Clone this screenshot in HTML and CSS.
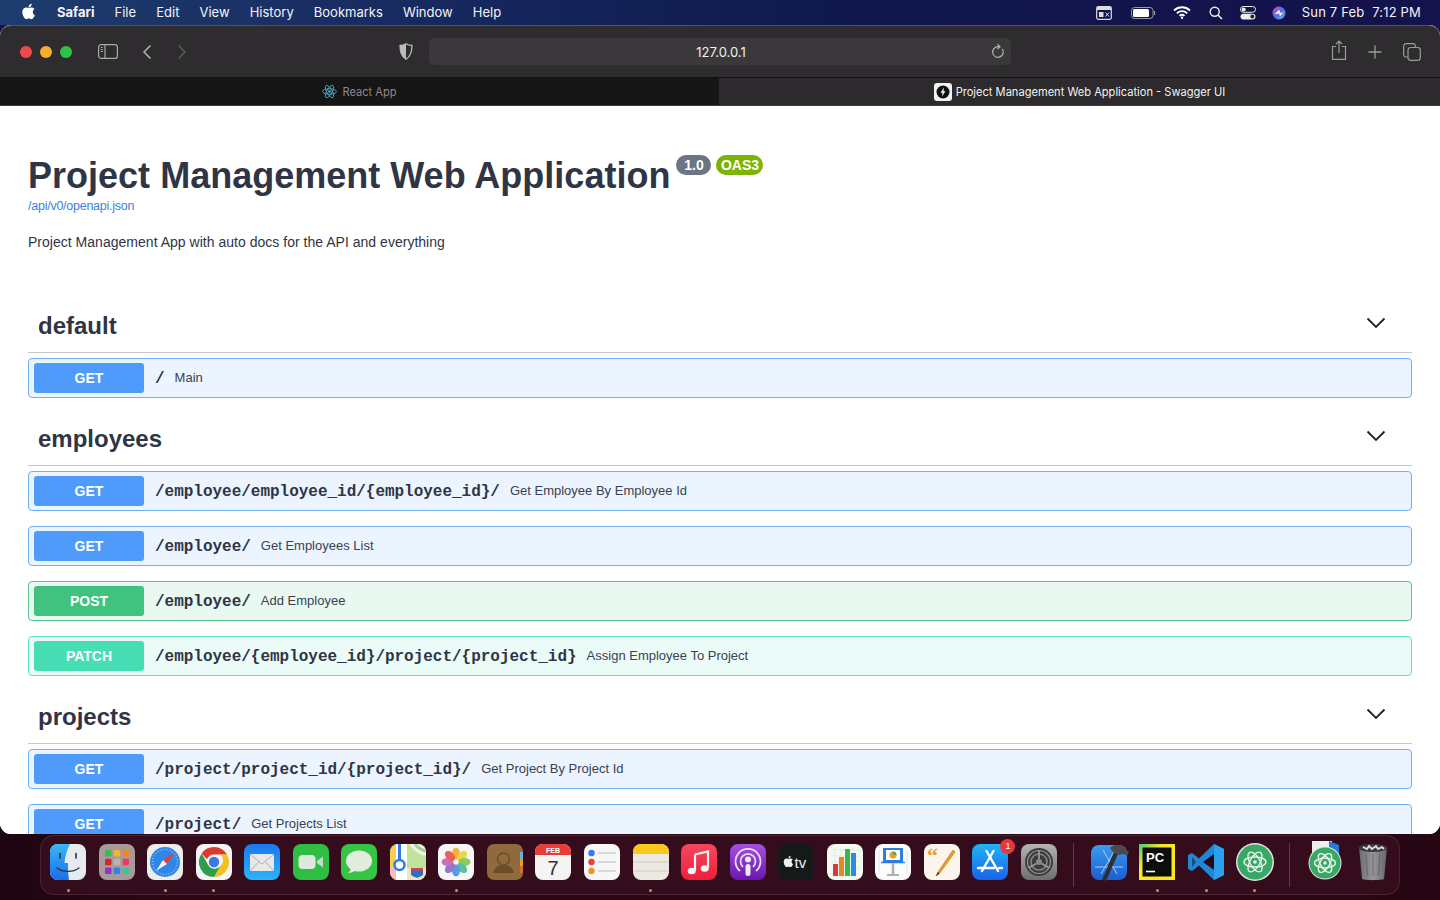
FILE: index.html
```html
<!DOCTYPE html>
<html lang="en">
<head>
<meta charset="utf-8">
<title>Project Management Web Application - Swagger UI</title>
<link rel="stylesheet" href="styles.css">
</head>
<body>
<div class="desktop">
  <header class="menubar">
    <svg class="apple" viewBox="0 0 24 24"><path fill="#fff" d="M17.05 12.04c-.03-2.6 2.12-3.85 2.22-3.91-1.21-1.77-3.09-2.01-3.76-2.04-1.6-.16-3.12.94-3.93.94-.81 0-2.06-.92-3.39-.89-1.74.03-3.35 1.01-4.25 2.57-1.81 3.14-.46 7.79 1.3 10.34.86 1.25 1.89 2.65 3.24 2.6 1.3-.05 1.79-.84 3.36-.84s2.01.84 3.39.82c1.4-.03 2.28-1.27 3.14-2.53.99-1.45 1.4-2.85 1.42-2.93-.03-.01-2.72-1.04-2.74-4.13zM14.47 4.4c.72-.87 1.2-2.08 1.07-3.28-1.03.04-2.28.69-3.02 1.55-.66.77-1.24 2-1.09 3.18 1.15.09 2.33-.59 3.04-1.45z"/></svg>
    <nav class="menus">
      <span class="menu-app">Safari</span><span>File</span><span>Edit</span><span>View</span><span>History</span><span>Bookmarks</span><span>Window</span><span>Help</span>
    </nav>
    <div class="status">
      <svg class="st st-cal" viewBox="0 0 16 14"><rect x=".7" y=".7" width="14.6" height="12.6" rx="1.5" fill="none" stroke="#ddd" stroke-width="1.2"/><rect x="1" y="1" width="14" height="3" fill="#ddd"/><rect x="3" y="6" width="4.500" height="5" fill="#ddd"/><path d="M9.500 6.500l3.500 4M13 6.500l-3.500 4" stroke="#ddd"/></svg>
      <svg class="st st-bat" viewBox="0 0 25 12"><rect x=".5" y=".5" width="21.500" height="11" rx="3" fill="none" stroke="#999"/><rect x="2" y="2" width="16" height="8" rx="1.500" fill="#fff"/><path d="M23.500 4v4" stroke="#999" stroke-width="1.200"/></svg>
      <svg class="st st-wifi" viewBox="0 0 18 13"><path d="M1 4.500a11.500 11.500 0 0 1 16 0M3.800 7.300a7.500 7.500 0 0 1 10.400 0M6.500 9.900a3.700 3.700 0 0 1 5 0" fill="none" stroke="#fff" stroke-width="1.800"/><circle cx="9" cy="11.800" r="1.200" fill="#fff"/></svg>
      <svg class="st st-search" viewBox="0 0 14 14"><circle cx="5.700" cy="5.700" r="4.500" fill="none" stroke="#eee" stroke-width="1.400"/><path d="M9 9l4 4" stroke="#eee" stroke-width="1.600"/></svg>
      <svg class="st st-ctrl" viewBox="0 0 16 14"><rect x=".5" y=".5" width="15" height="5.800" rx="2.900" fill="none" stroke="#eee"/><circle cx="3.700" cy="3.400" r="2" fill="#eee"/><rect x=".5" y="7.700" width="15" height="5.800" rx="2.900" fill="#eee"/><circle cx="12.300" cy="10.600" r="2" fill="#223"/></svg>
      <svg class="st st-siri" viewBox="0 0 14 14"><defs><linearGradient id="siri" x1="0" y1="0" x2="1" y2="1"><stop offset="0" stop-color="#d04fc0"/><stop offset=".5" stop-color="#5a68e8"/><stop offset="1" stop-color="#4cc4d8"/></linearGradient></defs><circle cx="7" cy="7" r="6.500" fill="url(#siri)"/><path d="M2.500 8.500L7 3.500l1.500 3.500 3-1-3.500 4.500L7 7.500z" fill="#fff" opacity=".9"/></svg>
      <span class="clock">Sun 7 Feb&nbsp; 7:12 PM</span>
    </div>
  </header>

  <main class="window">
    <div class="toolbar">
      <div class="lights"><i class="light red"></i><i class="light amber"></i><i class="light green"></i></div>
      <svg class="tb tb-side" viewBox="0 0 20 15"><rect x=".6" y=".6" width="18.800" height="13.800" rx="2.500" fill="none" stroke="#a9a9a9" stroke-width="1.200"/><path d="M7 1v13" stroke="#a9a9a9" stroke-width="1.200"/><path d="M2.800 3.500h2M2.800 5.500h2M2.800 7.500h2" stroke="#a9a9a9"/></svg>
      <svg class="tb tb-back" viewBox="0 0 10 16"><path d="M8.500 1.500L2 8l6.500 6.500" fill="none" stroke="#b5b5b5" stroke-width="1.500"/></svg>
      <svg class="tb tb-fwd" viewBox="0 0 10 16"><path d="M1.500 1.500L8 8l-6.500 6.500" fill="none" stroke="#5a5a5a" stroke-width="1.500"/></svg>
      <svg class="tb tb-shield" viewBox="0 0 14 17"><path d="M7 .8c2 1.200 3.800 1.600 6 1.700 0 6-.8 10.500-6 13.700C1.800 13 1 8.500 1 2.500c2.200-.1 4-.5 6-1.700z" fill="none" stroke="#bbb" stroke-width="1.300"/><path d="M7 .8c-2 1.200-3.800 1.600-6 1.700 0 6 .8 10.500 6 13.700z" fill="#bbb"/></svg>
      <div class="urlbar">
        <span class="url">127.0.0.1</span>
        <svg class="reload" viewBox="0 0 14 16"><path d="M11.300 6a5.300 5.300 0 1 1-4.300-2.300h1.500" fill="none" stroke="#b5b5b5" stroke-width="1.200"/><path d="M6.500 1.200L9 3.700 6.500 6" fill="none" stroke="#b5b5b5" stroke-width="1.200"/></svg>
      </div>
      <div class="tb-right">
        <svg class="tb tb-share" viewBox="0 0 16 20"><path d="M5 6.500H1.500v12.800h13V6.500H11" fill="none" stroke="#9c9c9c" stroke-width="1.200"/><path d="M8 13V1.200M5 4l3-3 3 3" fill="none" stroke="#9c9c9c" stroke-width="1.200"/></svg>
        <svg class="tb tb-plus" viewBox="0 0 14 14"><path d="M7 .5v13M.5 7h13" stroke="#9c9c9c" stroke-width="1.300"/></svg>
        <svg class="tb tb-tabs" viewBox="0 0 18 18"><rect x="5" y="4.500" width="12.300" height="12.800" rx="2.500" fill="none" stroke="#9c9c9c" stroke-width="1.200"/><path d="M5 14H3a2.300 2.300 0 0 1-2.300-2.300V3A2.300 2.300 0 0 1 3 .7h7A2.300 2.300 0 0 1 12.300 3v1.500" fill="none" stroke="#9c9c9c" stroke-width="1.200"/></svg>
      </div>
    </div>

    <div class="tabs">
      <div class="tab tab-off">
        <svg class="favicon-react" viewBox="0 0 24 24"><g fill="none" stroke="#4fb8d8" stroke-width="1.300"><ellipse cx="12" cy="12" rx="11" ry="4.300"/><ellipse cx="12" cy="12" rx="11" ry="4.300" transform="rotate(60 12 12)"/><ellipse cx="12" cy="12" rx="11" ry="4.300" transform="rotate(120 12 12)"/></g><circle cx="12" cy="12" r="2.100" fill="#4fb8d8"/></svg>
        <span>React App</span>
      </div>
      <div class="tab tab-on">
        <svg class="favicon-swagger" viewBox="0 0 18 18"><rect width="18" height="18" rx="3" fill="#f2f2f2"/><circle cx="9" cy="9" r="6.500" fill="#111"/><path d="M10 4.500L6.500 9.800h2L8 13.500l3.500-5.300h-2z" fill="#f2f2f2"/></svg>
        <span>Project Management Web Application - Swagger UI</span>
      </div>
    </div>

    <div class="page">
      <section class="info">
        <div class="title-row">
          <h1 class="title">Project Management Web Application</h1>
          <span class="badge badge-ver">1.0</span>
          <span class="badge badge-oas">OAS3</span>
        </div>
        <a class="spec-link" href="#">/api/v0/openapi.json</a>
        <p class="desc">Project Management App with auto docs for the API and everything</p>
      </section>

      <section class="tag">
        <div class="tag-head"><h2>default</h2><svg class="chev" viewBox="0 0 20 12"><path d="M1.500 1.500L10 10l8.500-8.500" fill="none" stroke="#222" stroke-width="1.800"/></svg></div>
        <div class="op op-get"><span class="method">GET</span><span class="path">/</span><span class="summary">Main</span></div>
      </section>

      <section class="tag">
        <div class="tag-head"><h2>employees</h2><svg class="chev" viewBox="0 0 20 12"><path d="M1.500 1.500L10 10l8.500-8.500" fill="none" stroke="#222" stroke-width="1.800"/></svg></div>
        <div class="op op-get"><span class="method">GET</span><span class="path">/employee/employee_id/{employee_id}/</span><span class="summary">Get Employee By Employee Id</span></div>
        <div class="op op-get"><span class="method">GET</span><span class="path">/employee/</span><span class="summary">Get Employees List</span></div>
        <div class="op op-post"><span class="method">POST</span><span class="path">/employee/</span><span class="summary">Add Employee</span></div>
        <div class="op op-patch"><span class="method">PATCH</span><span class="path">/employee/{employee_id}/project/{project_id}</span><span class="summary">Assign Employee To Project</span></div>
      </section>

      <section class="tag">
        <div class="tag-head"><h2>projects</h2><svg class="chev" viewBox="0 0 20 12"><path d="M1.500 1.500L10 10l8.500-8.500" fill="none" stroke="#222" stroke-width="1.800"/></svg></div>
        <div class="op op-get"><span class="method">GET</span><span class="path">/project/project_id/{project_id}/</span><span class="summary">Get Project By Project Id</span></div>
        <div class="op op-get"><span class="method">GET</span><span class="path">/project/</span><span class="summary">Get Projects List</span></div>
      </section>
    </div>
  </main>

  <footer class="dock-area">
    <div class="dock">
      <div class="app"><svg viewBox="0 0 36 36"><defs><clipPath id="r"><rect width="36" height="36" rx="8"/></clipPath><linearGradient id="fb" x1="0" y1="0" x2="0" y2="1"><stop offset="0" stop-color="#38b6f8"/><stop offset="1" stop-color="#1a6fe8"/></linearGradient></defs><g clip-path="url(#r)"><rect width="36" height="36" fill="#e6ebf0"/><path d="M0 0h20c-3 6-5 12-5.500 19H18c0 6 0 11 1 17H0z" fill="url(#fb)"/></g><path d="M10 9.500v4.500M26 9.500v4.500" stroke="#234" stroke-width="1.600" stroke-linecap="round"/><path d="M7 24c6 4.500 16 4.500 22 0" fill="none" stroke="#234" stroke-width="1.300" stroke-linecap="round"/></svg><i class="dot"></i></div>
      <div class="app"><svg viewBox="0 0 36 36"><rect width="36" height="36" rx="8" fill="#a89a9a"/><g><rect x="6" y="6" width="6.500" height="6.500" rx="1.200" fill="#3dbb4c"/><rect x="14.700" y="6" width="6.500" height="6.500" rx="1.200" fill="#f5b32c"/><rect x="23.500" y="6" width="6.500" height="6.500" rx="1.200" fill="#f0852b"/><rect x="6" y="14.700" width="6.500" height="6.500" rx="1.200" fill="#d8232f"/><rect x="14.700" y="14.700" width="6.500" height="6.500" rx="1.200" fill="#b5b5b5"/><rect x="23.500" y="14.700" width="6.500" height="6.500" rx="1.200" fill="#ee3a63"/><rect x="6" y="23.500" width="6.500" height="6.500" rx="1.200" fill="#9530c8"/><rect x="14.700" y="23.500" width="6.500" height="6.500" rx="1.200" fill="#2c86ea"/><rect x="23.500" y="23.500" width="6.500" height="6.500" rx="1.200" fill="#32c79c"/></g></svg></div>
      <div class="app"><svg viewBox="0 0 36 36"><rect width="36" height="36" rx="8" fill="#ececec"/><circle cx="18" cy="18" r="15" fill="#2f86e6"/><circle cx="18" cy="18" r="12.500" fill="none" stroke="#8fc0f0" stroke-width="1.500" stroke-dasharray="1 2"/><path d="M27 9L16 16l4 4z" fill="#ee3b30"/><path d="M9 27l7-11 4 4z" fill="#f5f5f5"/></svg><i class="dot"></i></div>
      <div class="app"><svg viewBox="0 0 36 36"><rect width="36" height="36" rx="8" fill="#f4f4f4"/><path d="M18 3a15 15 0 0 1 13 7.500H18a7.500 7.500 0 0 0-7 4.800L5.700 9.400A15 15 0 0 1 18 3z" fill="#d93b2f"/><path d="M31 10.500A15 15 0 0 1 18 33l6.400-11A7.500 7.500 0 0 0 24.500 10.500z" fill="#f4c020"/><path d="M5.700 9.400L12 20.500A7.500 7.500 0 0 0 24.400 22L18 33A15 15 0 0 1 5.700 9.400z" fill="#2f9e48"/><circle cx="18" cy="18" r="6.500" fill="#f4f4f4"/><circle cx="18" cy="18" r="5.200" fill="#3b78e0"/></svg><i class="dot"></i></div>
      <div class="app"><svg viewBox="0 0 36 36"><defs><linearGradient id="mail" x1="0" y1="0" x2="0" y2="1"><stop offset="0" stop-color="#1a78f0"/><stop offset="1" stop-color="#2bb4f8"/></linearGradient></defs><rect width="36" height="36" rx="8" fill="url(#mail)"/><rect x="6" y="10" width="24" height="17" rx="1.500" fill="#e8e8e8"/><path d="M6.500 10.500L18 20l11.500-9.500M6.500 26.500l8.500-9M29.500 26.500l-8.500-9" fill="none" stroke="#a8a8a8" stroke-width=".9"/></svg></div>
      <div class="app"><svg viewBox="0 0 36 36"><rect width="36" height="36" rx="8" fill="#2fbe45"/><rect x="5.500" y="11" width="17" height="14" rx="4" fill="#dfe8dd"/><path d="M24 17l6-4.500v11L24 19z" fill="#c5dcc5"/></svg></div>
      <div class="app"><svg viewBox="0 0 36 36"><rect width="36" height="36" rx="8" fill="#35c443"/><ellipse cx="18" cy="17" rx="13" ry="10.500" fill="#e2ecdf"/><path d="M10 23c0 3-1 4.500-3 6 3 0 6-1 8-3z" fill="#e2ecdf"/></svg></div>
      <div class="app"><svg viewBox="0 0 36 36"><defs><clipPath id="m"><rect width="36" height="36" rx="8"/></clipPath></defs><g clip-path="url(#m)"><rect width="36" height="36" fill="#bfe39a"/><path d="M19 0c5 7 10 11 17 12V0z" fill="#f2efe3"/><path d="M25 0c3 4 6 6 11 7" fill="none" stroke="#9fd48a" stroke-width="3"/><path d="M14 36V24h22v12z" fill="#efe4c2"/><path d="M0 0h6v36H0z" fill="#f5d04a"/><path d="M0 24h6v12H0z" fill="#f7b8c4"/><path d="M6 0h11v36H6z" fill="#fff"/><path d="M9.500 0v19" stroke="#2c7ce8" stroke-width="3"/><circle cx="9.500" cy="21" r="5" fill="#fff" stroke="#2c7ce8" stroke-width="2.500"/><path d="M21 24h12v6c0 2-4 3-6 4-2-1-6-2-6-4z" fill="#2f6cc4"/><rect x="21" y="24" width="12" height="2.500" fill="#d8423c"/></g></svg></div>
      <div class="app"><svg viewBox="0 0 36 36"><rect width="36" height="36" rx="8" fill="#f6f6f6"/><g opacity=".85"><ellipse cx="18" cy="9.500" rx="4" ry="6" fill="#f6a623"/><ellipse cx="24" cy="12" rx="4" ry="6" fill="#e8d02e" transform="rotate(45 24 12)"/><ellipse cx="26.500" cy="18" rx="6" ry="4" fill="#7cc242"/><ellipse cx="24" cy="24" rx="4" ry="6" fill="#3fb59a" transform="rotate(-45 24 24)"/><ellipse cx="18" cy="26.500" rx="4" ry="6" fill="#3e8fd8"/><ellipse cx="12" cy="24" rx="4" ry="6" fill="#8460c8" transform="rotate(45 12 24)"/><ellipse cx="9.500" cy="18" rx="6" ry="4" fill="#c25aa8"/><ellipse cx="12" cy="12" rx="4" ry="6" fill="#e8483c" transform="rotate(-45 12 12)"/></g></svg><i class="dot"></i></div>
      <div class="app"><svg viewBox="0 0 36 36"><rect width="36" height="36" rx="7" fill="#8f6a3c"/><rect x="33" y="8" width="3" height="7" fill="#6cb0d8"/><rect x="33" y="15" width="3" height="7" fill="#e0a030"/><rect x="33" y="22" width="3" height="7" fill="#d8702c"/><circle cx="16.500" cy="15" r="6" fill="none" stroke="#6b4d28" stroke-width="1.500"/><path d="M6 29c2-7 6-8 10.500-8S25 22 27 29z" fill="#6b4d28"/></svg></div>
      <div class="app"><svg viewBox="0 0 36 36"><defs><clipPath id="c"><rect width="36" height="36" rx="8"/></clipPath></defs><g clip-path="url(#c)"><rect width="36" height="36" fill="#f6f4f2"/><rect width="36" height="11" fill="#ea3d3a"/></g><text class="cal-mon" x="18" y="8.600" text-anchor="middle">FEB</text><text class="cal-day" x="18" y="31" text-anchor="middle">7</text></svg></div>
      <div class="app"><svg viewBox="0 0 36 36"><rect width="36" height="36" rx="8" fill="#f7f7f7"/><circle cx="7.500" cy="9" r="3.200" fill="#2f7cf0"/><circle cx="7.500" cy="18" r="3.200" fill="#e8413c"/><circle cx="7.500" cy="27" r="3.200" fill="#f0932c"/><path d="M14 9h18M14 18h18M14 27h18" stroke="#bbb" stroke-width="1"/></svg></div>
      <div class="app"><svg viewBox="0 0 36 36"><defs><clipPath id="n"><rect width="36" height="36" rx="8"/></clipPath></defs><g clip-path="url(#n)"><rect width="36" height="36" fill="#ece9e2"/><rect width="36" height="10" fill="#f9c81e"/></g><path d="M0 18h36M0 27h36" stroke="#cfccc5"/></svg><i class="dot"></i></div>
      <div class="app"><svg viewBox="0 0 36 36"><defs><linearGradient id="mus" x1="0" y1="0" x2="0" y2="1"><stop offset="0" stop-color="#f9475d"/><stop offset="1" stop-color="#ee1f3c"/></linearGradient></defs><rect width="36" height="36" rx="8" fill="url(#mus)"/><path d="M14 10.500L27 7.500v16" fill="none" stroke="#f4f4f4" stroke-width="2.200"/><path d="M14 10.500v16" stroke="#f4f4f4" stroke-width="2.200"/><ellipse cx="10.700" cy="27" rx="4" ry="3.300" fill="#f4f4f4"/><ellipse cx="23.700" cy="24.500" rx="4" ry="3.300" fill="#f4f4f4"/></svg></div>
      <div class="app"><svg viewBox="0 0 36 36"><defs><linearGradient id="pod" x1="0" y1="0" x2="0" y2="1"><stop offset="0" stop-color="#a74fe0"/><stop offset="1" stop-color="#6a16b0"/></linearGradient></defs><rect width="36" height="36" rx="8" fill="url(#pod)"/><g fill="none" stroke="#eadcf5" stroke-width="1.800"><path d="M10 27a12.500 12.500 0 1 1 16 0"/><path d="M13 23a7.500 7.500 0 1 1 10 0"/></g><circle cx="18" cy="15.500" r="3" fill="#f0e8f6"/><rect x="15.500" y="20" width="5" height="12" rx="2.500" fill="#f0e8f6"/></svg></div>
      <div class="app"><svg viewBox="0 0 36 36"><rect width="36" height="36" rx="8" fill="#141a1a"/><g transform="translate(4 11) scale(.56)"><path fill="#f2f2f2" d="M17.05 12.04c-.03-2.6 2.12-3.85 2.22-3.91-1.21-1.77-3.09-2.01-3.76-2.04-1.6-.16-3.12.94-3.93.94-.81 0-2.06-.92-3.39-.89-1.74.03-3.35 1.01-4.25 2.57-1.81 3.14-.46 7.79 1.3 10.34.86 1.25 1.89 2.65 3.24 2.6 1.3-.05 1.79-.84 3.36-.84s2.01.84 3.39.82c1.4-.03 2.28-1.27 3.14-2.53.99-1.45 1.4-2.85 1.42-2.93-.03-.01-2.72-1.04-2.74-4.13zM14.47 4.4c.72-.87 1.2-2.08 1.07-3.28-1.03.04-2.28.69-3.02 1.55-.66.77-1.24 2-1.09 3.18 1.15.09 2.33-.59 3.04-1.45z"/></g><text class="tv" x="16.500" y="23.500">tv</text></svg></div>
      <div class="app"><svg viewBox="0 0 36 36"><rect width="36" height="36" rx="8" fill="#f6f8f2"/><path d="M4 6h28M4 12h28M4 18h28M4 24h28M4 30h28M8 4v28M14 4v28M20 4v28M26 4v28" stroke="#d9e8d2" stroke-width=".6"/><rect x="6" y="20" width="5" height="12" fill="#d83a3a"/><rect x="12" y="13" width="5" height="19" fill="#ee8420"/><rect x="18" y="5" width="5" height="27" fill="#36b84a"/><rect x="24" y="9" width="5" height="23" fill="#2c8ae0"/></svg></div>
      <div class="app"><svg viewBox="0 0 36 36"><rect width="36" height="36" rx="8" fill="#fbfbfb"/><path d="M4 6v24M32 6v24" stroke="#dde6f0"/><rect x="8" y="4" width="20" height="14" fill="#2b7fe0"/><rect x="11" y="6" width="14" height="10" fill="#fff"/><circle cx="18" cy="11" r="3.500" fill="#e8a028"/><path d="M18 7.500a3.500 3.500 0 0 1 3.500 3.500H18z" fill="#4cad55"/><path d="M6 18.500h24" stroke="#2b7fe0" stroke-width="1.500"/><path d="M18 19v11" stroke="#a8b0b8" stroke-width="2.500"/><path d="M12 31h12" stroke="#a8b0b8" stroke-width="2"/></svg></div>
      <div class="app"><svg viewBox="0 0 36 36"><rect width="36" height="36" rx="8" fill="#fbf5ec"/><text class="quote" x="3" y="19">“</text><path d="M29 6L14 28l-2 4 3.500-2.500L31 8z" fill="#f0a020" stroke="#b8720c" stroke-width=".6"/><path d="M12 32l2-4 1.500 1.500z" fill="#333"/></svg></div>
      <div class="app"><svg viewBox="0 0 36 36"><defs><linearGradient id="as" x1="0" y1="0" x2="0" y2="1"><stop offset="0" stop-color="#1fb4f8"/><stop offset="1" stop-color="#1b62e8"/></linearGradient></defs><rect width="36" height="36" rx="8" fill="url(#as)"/><g fill="none" stroke="#fff" stroke-width="2.400" stroke-linecap="round"><path d="M21.500 7L10 27"/><path d="M14.500 7L26 27"/><path d="M6 24h16M27 24h3"/></g></svg><span class="badge-app">1</span></div>
      <div class="app"><svg viewBox="0 0 36 36"><defs><linearGradient id="sp" x1="0" y1="0" x2="0" y2="1"><stop offset="0" stop-color="#b4b4b4"/><stop offset="1" stop-color="#6e6e6e"/></linearGradient></defs><rect width="36" height="36" rx="8" fill="url(#sp)"/><circle cx="18" cy="18" r="14" fill="#3c3c3c"/><circle cx="18" cy="18" r="11.500" fill="none" stroke="#9a9a9a" stroke-width="1.200"/><circle cx="18" cy="18" r="8" fill="none" stroke="#888" stroke-width="1.500"/><circle cx="18" cy="18" r="3" fill="#888"/><path d="M18 15V7M15.400 19.500l-7 4M20.600 19.500l7 4" stroke="#999" stroke-width="1.800"/></svg></div>
      <div class="sep"></div>
      <div class="app"><svg viewBox="0 0 36 36"><defs><linearGradient id="xc" x1="0" y1="0" x2="0" y2="1"><stop offset="0" stop-color="#3a9cf2"/><stop offset="1" stop-color="#1b5ed0"/></linearGradient></defs><rect x="0" y="1" width="36" height="35" rx="8" fill="url(#xc)"/><g fill="none" stroke="#a9d0f8" stroke-width="1"><path d="M24 6L10 30M12 6l14 24M4 23h28"/></g><path d="M11 36L23 8l4 2L15 37z" fill="#2f2f34"/><path d="M19 4c4-4 10-4 14-1l5 5-2 4-3-2-6 1-5-3z" fill="#4a4a50"/></svg></div>
      <div class="app"><svg viewBox="0 0 36 36"><defs><linearGradient id="pcg" x1="0" y1="0" x2="1" y2="1"><stop offset="0" stop-color="#46c878"/><stop offset=".35" stop-color="#f5ea28"/><stop offset="1" stop-color="#f8e71c"/></linearGradient></defs><rect width="36" height="36" fill="url(#pcg)"/><rect x="3.500" y="3.500" width="29" height="29" fill="#0d0d0d"/><text class="pc" x="7" y="17.500">PC</text><path d="M7 27.500h9" stroke="#fff" stroke-width="1.600"/></svg><i class="dot"></i></div>
      <div class="app"><svg viewBox="0 0 36 36"><path d="M26 0l10 5v26l-10 5L11 21.500l-7 5.500-4-2V11l4-2 7 5.500z" fill="#1f87d8"/><path d="M26 0l10 5v26l-10 5z" fill="#2aa0f0"/><path d="M26 10L15 18l11 8z" fill="#2a0812"/><path d="M4 13l4 5-4 5z" fill="#2a0812" opacity=".5"/></svg><i class="dot"></i></div>
      <div class="app"><svg viewBox="0 0 36 36"><circle cx="18" cy="18" r="19" fill="#e0e4e0"/><circle cx="18" cy="18" r="17.500" fill="#39a866"/><g fill="none" stroke="#eef6ee" stroke-width="1.300"><ellipse cx="18" cy="18" rx="11" ry="5"/><ellipse cx="18" cy="18" rx="11" ry="5" transform="rotate(60 18 18)"/><ellipse cx="18" cy="18" rx="11" ry="5" transform="rotate(120 18 18)"/></g><circle cx="18" cy="18" r="1.800" fill="#eef6ee"/></svg><i class="dot"></i></div>
      <div class="sep"></div>
      <div class="app"><svg viewBox="0 0 36 36"><rect x="5" y="-3" width="20" height="12" fill="#eee"/><path d="M22 -3l10 4v12H22z" fill="#2b78d8"/><circle cx="18" cy="19" r="16.500" fill="#e0e4e0"/><circle cx="18" cy="19" r="15.500" fill="#39a866"/><g fill="none" stroke="#eef6ee" stroke-width="1.300"><ellipse cx="18" cy="19" rx="10.500" ry="4.800"/><ellipse cx="18" cy="19" rx="10.500" ry="4.800" transform="rotate(60 18 19)"/><ellipse cx="18" cy="19" rx="10.500" ry="4.800" transform="rotate(120 18 19)"/></g><circle cx="18" cy="19" r="1.700" fill="#eef6ee"/></svg></div>
      <div class="app"><svg viewBox="0 0 36 36"><defs><linearGradient id="tr" x1="0" y1="0" x2="1" y2="0"><stop offset="0" stop-color="#6c6c70"/><stop offset=".5" stop-color="#97979b"/><stop offset="1" stop-color="#66666a"/></linearGradient></defs><path d="M4 3h28l-3 32c-3 1.500-19 1.500-22 0z" fill="url(#tr)"/><ellipse cx="18" cy="4" rx="14.500" ry="4" fill="#3a3a3e"/><path d="M8 3l4 2 2-3 3 3 4-3 2 3 4-2 2 2" fill="none" stroke="#ddd" stroke-width="1.800"/><path d="M11 10l1.500 22M18 10v22M25 10l-1.500 22" stroke="#58585c" stroke-width=".7"/></svg></div>
    </div>
  </footer>
</div>
</body>
</html>
```
FILE: styles.css
```css
* { box-sizing: border-box; }
html, body { margin: 0; height: 100%; }
body { font-family: "Liberation Sans", Arial, sans-serif; overflow: hidden; }

.desktop {
  width: 1440px; height: 900px; overflow: hidden;
  display: flex; flex-direction: column;
  background: linear-gradient(180deg, #12164c 0, #12164c 50%, #22060f 50%, #22060f 100%);
}

/* Menu bar */
.menubar {
  height: 25px; flex: none; display: flex; align-items: center;
  padding: 0 19px 0 20px;
  background: linear-gradient(90deg, #1e3c6e 0, #15265c 35%, #0f174a 60%, #15124c 100%);
  color: #f4f4f6; font: 13px/25px "Inter", "Liberation Sans", sans-serif;
}
.apple { width: 18px; height: 18px; margin-top: -2px; }
.menus { display: flex; gap: 20.100px; margin-left: 19px; }
.menu-app { font-weight: 700; }
.status { margin-left: auto; display: flex; align-items: center; }
.st { flex: none; display: block; }
.st-cal { width: 16px; height: 14px; }
.st-bat { width: 25px; height: 12px; margin-left: 19px; }
.st-wifi { width: 18px; height: 13px; margin-left: 17px; }
.st-search { width: 14px; height: 14px; margin-left: 18px; }
.st-ctrl { width: 16px; height: 14px; margin-left: 17px; }
.st-siri { width: 14px; height: 14px; margin-left: 16px; }
.clock { margin-left: 16px; white-space: nowrap; letter-spacing: .18px; }

/* Window */
.window {
  height: 809px; flex: none; display: flex; flex-direction: column;
  border-radius: 11px; overflow: hidden; background: #fff;
}
.toolbar {
  height: 52px; flex: none; display: flex; align-items: center;
  padding: 0 19px 0 20px; background: #2e2c2e;
  border-top: 1px solid #555356;
  border-radius: 11px 11px 0 0;
}
.lights { display: flex; gap: 8px; }
.light { display: block; width: 12px; height: 12px; border-radius: 50%; }
.red { background: #f3484a; }
.amber { background: #f6ad2a; }
.green { background: #2ec24a; }
.tb { flex: none; display: block; }
.tb-side { width: 20px; height: 15px; margin-left: 26px; }
.tb-back { width: 10px; height: 16px; margin-left: 24px; }
.tb-fwd { width: 10px; height: 16px; margin-left: 25px; }
.tb-shield { width: 14px; height: 17px; margin-left: 212px; }
.urlbar {
  width: 582px; height: 27px; flex: none; margin-left: 16px;
  display: flex; align-items: center; position: relative; justify-content: center;
  background: #3a383a; border-radius: 5px;
}
.url { color: #f0f0f0; font: 13px "Inter", "Liberation Sans", sans-serif; margin-left: 2px; }
.reload { position: absolute; right: 6px; top: 5px; width: 14px; height: 16px; }
.tb-right { margin-left: auto; display: flex; align-items: center; }
.tb-share { width: 16px; height: 20px; margin-top: -3px; }
.tb-plus { width: 14px; height: 14px; margin-left: 21px; }
.tb-tabs { width: 18px; height: 18px; margin-left: 21px; }

.tabs {
  height: 29px; flex: none; display: flex;
  border-top: 1px solid #121112; border-bottom: 1px solid #3c3a3c;
  font: 11.100px "Inter", "Liberation Sans", sans-serif;
}
.tab { display: flex; align-items: center; justify-content: center; gap: 5px; }
.tab-off { width: 719px; background: #161616; color: #8a8a8a; }
.tab-on { flex: 1; background: #2c2a2c; color: #f2f2f2; gap: 4px; }
.favicon-react { width: 15px; height: 15px; }
.favicon-swagger { width: 18px; height: 18px; }

/* Swagger page */
.page { flex: 1; min-height: 0; overflow: hidden; padding: 0 28px; background: #fff; color: #3b4151; }
.info { height: 194px; padding-top: 49px; }
.title-row { display: flex; align-items: flex-start; height: 41px; }
.title { margin: 0; font-size: 36px; line-height: 41px; font-weight: 700; color: #2f3545; letter-spacing: .01px; }
.badge {
  height: 20px; border-radius: 10px; color: #fff;
  font-size: 14px; font-weight: 700; line-height: 20px; text-align: center;
}
.badge-ver { width: 35px; margin-left: 6px; background: #6d7483; }
.badge-oas { width: 47px; margin-left: 5px; background: #7cb305; }
.spec-link { display: block; margin-top: 3px; font-size: 12.500px; line-height: 15px; color: #3f7fdc; text-decoration: none; letter-spacing: -.25px; }
.desc { margin: 19px 0 0; font-size: 14px; line-height: 18px; color: #2f3545; letter-spacing: .02px; }

.tag-head {
  height: 53px; margin-bottom: 5px; padding: 0 26px 0 10px;
  display: flex; align-items: center; justify-content: space-between;
  border-bottom: 1px solid #c6c8cc;
}
.tag-head h2 { margin: 0; font-size: 24px; line-height: 1; font-weight: 700; color: #2f3545; }
.chev { width: 20px; height: 12px; margin-top: -6px; }

.op {
  height: 40px; margin-bottom: 15px; padding: 0 5px;
  display: flex; align-items: center;
  border: 1px solid; border-radius: 4px;
}
.op-get { border-color: #6fb0f5; background: #ebf4ff; }
.op-post { border-color: #57c690; background: #e9f8f1; }
.op-patch { border-color: #5fe0c0; background: #ebfbf7; }
.method {
  width: 110px; height: 30px; flex: none; border-radius: 3px; color: #fff;
  font-size: 14px; font-weight: 700; line-height: 30px; text-align: center;
}
.op-get .method { background: #4f9bfb; }
.op-post .method { background: #41c27f; }
.op-patch .method { background: #47deb5; }
.path { margin-left: 11px; padding-top: 2px; font: 700 16px/1 "Liberation Mono", monospace; color: #2f3545; letter-spacing: -.02px; }
.summary { margin-left: 10px; font-size: 13px; color: #3b4151; margin-top: -1px; }

/* Dock */
.dock-area {
  flex: 1; min-height: 0; padding: 1px 40px 0;
  background: linear-gradient(90deg, #1c0510 0, #2c0814 12%, #2c0814 88%, #260713 100%);
}
.dock {
  width: 1360px; height: 60px; display: flex; align-items: flex-start; gap: 12.550px;
  padding: 8px 9px 0;
  background: #350c1b; border: 1px solid rgba(255,255,255,.1); border-radius: 14px;
}
.app { position: relative; width: 36px; height: 36px; flex: none; }
.app svg { display: block; width: 36px; height: 36px; overflow: visible; }
.dot { position: absolute; left: 16.500px; top: 45px; width: 3px; height: 3px; border-radius: 50%; background: #c08a98; }
.sep { width: 1px; height: 44px; margin: -1px 3.950px 0; flex: none; background: rgba(255,255,255,.2); }
.badge-app {
  position: absolute; right: -7px; top: -5px; width: 15px; height: 15px; border-radius: 50%;
  background: #e8373a; color: #fff; font-size: 9px; line-height: 15px; text-align: center;
}
.cal-mon { font: 700 7px "Liberation Sans", sans-serif; fill: #fff; }
.cal-day { font: 20px "Liberation Sans", sans-serif; fill: #333; }
.tv { font: 400 15px "Liberation Sans", sans-serif; fill: #f2f2f2; }
.quote { font: 700 22px "Liberation Serif", serif; fill: #e8a028; }
.pc { font: 700 13px "Liberation Sans", sans-serif; fill: #fff; }
```
